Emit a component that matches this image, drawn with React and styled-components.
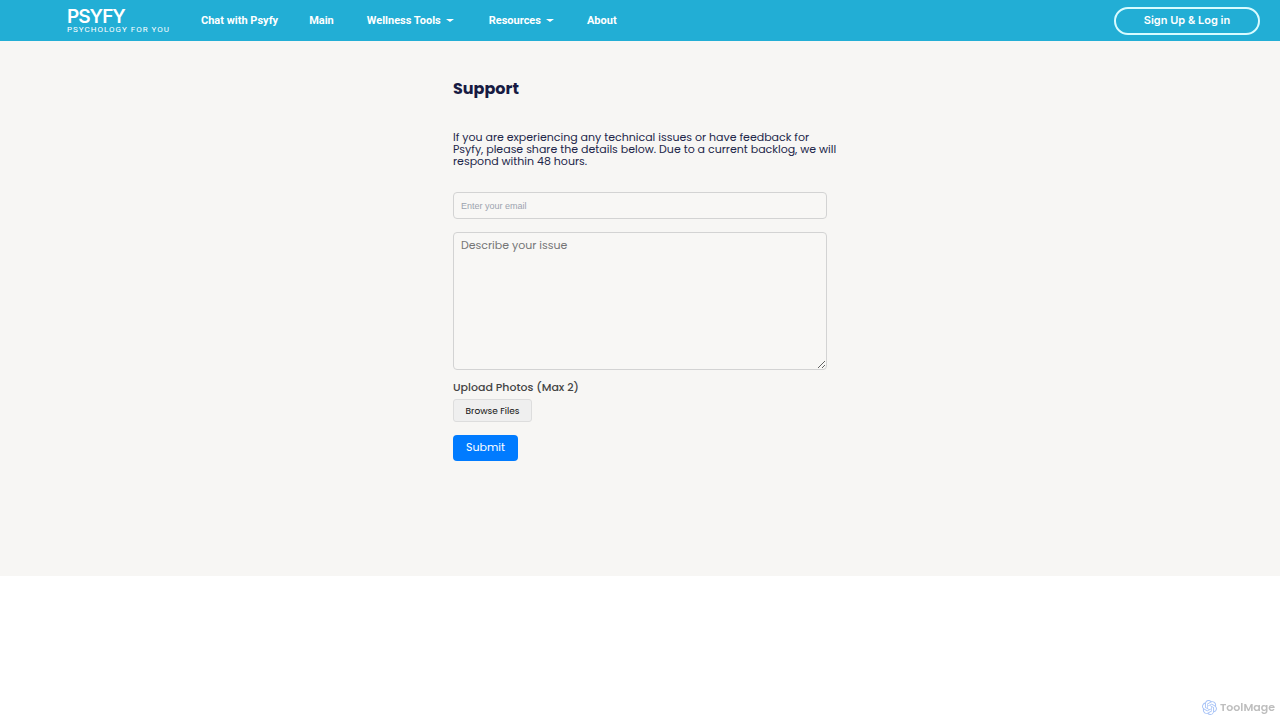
import React, { useRef, useState } from 'react'
import styled, { createGlobalStyle } from 'styled-components'
import { SiOpenai } from 'react-icons/si'

const GlobalStyle = createGlobalStyle`
    * {
        box-sizing: border-box;
    }

    body {
        margin: 0;
        background: #ffffff;
        font-family: Poppins, Inter, sans-serif;
    }
`

const Header = styled.header`
    display: flex;
    align-items: center;
    height: 41px;
    padding: 0 20px 0 67px;
    background-color: #22aed5;
    color: #ffffff;
`

const Logo = styled.a`
    display: flex;
    flex-direction: column;
    width: 104px;
    margin-right: 30px;
    color: #ffffff;
    font-family: Inter, sans-serif;
    text-decoration: none;
    white-space: nowrap;
`

const LogoName = styled.span`
    font-size: 19px;
    font-weight: 600;
    line-height: 18px;
    letter-spacing: -1px;
`

const LogoTagline = styled.span`
    font-family: Roboto, sans-serif;
    font-size: 8px;
    font-weight: 400;
    line-height: 8px;
    letter-spacing: 1px;
`

const Nav = styled.nav`
    display: flex;
    align-items: center;
    flex: 1;
    gap: 31px;
`

const NavLink = styled.a`
    color: #ffffff;
    font: 700 11px/16px Roboto, sans-serif;
    text-decoration: none;
    white-space: nowrap;
`

const NavDropdown = styled.button`
    display: flex;
    align-items: center;
    gap: 5px;
    padding: 0 2px;
    border: none;
    background: none;
    color: #ffffff;
    font: 700 11px/16px Roboto, sans-serif;
    white-space: nowrap;
    cursor: pointer;
`

const Caret = styled.span`
    border: 4px solid transparent;
    border-top: 3px solid #ffffff;
    border-bottom: none;
`

const LoginButton = styled.button`
    width: 146px;
    height: 28px;
    padding: 0 0 2px;
    border: 2px solid #d8fbff;
    border-radius: 14px;
    background: none;
    color: #ffffff;
    font: 600 11px/16px Inter, sans-serif;
    white-space: nowrap;
    cursor: pointer;
`

const Main = styled.main`
    padding: 36px 20px 115px;
    background-color: #f7f6f4;
`

const SupportForm = styled.form`
    display: flex;
    flex-direction: column;
    align-items: flex-start;
    max-width: 374px;
    margin: 0 auto;
`

const Title = styled.h1`
    margin: 0 0 30px;
    color: #171b43;
    font-size: 16px;
    font-weight: 700;
    line-height: 24px;
`

const Intro = styled.p`
    margin: 0 0 25px;
    color: #22264a;
    font-size: 11px;
    line-height: 12px;

    @media (min-width: 480px) {
        white-space: nowrap;
    }
`

const EmailInput = styled.input`
    width: 100%;
    height: 27px;
    margin-bottom: 13px;
    padding: 0 7px;
    border: 1px solid #d3d3d3;
    border-radius: 4px;
    background: #f8f7f5;
    font: 9px/12px 'Liberation Sans', sans-serif;

    &::placeholder {
        color: #9ca3af;
    }
`

const IssueInput = styled.textarea`
    width: 100%;
    height: 138px;
    margin-bottom: 9px;
    padding: 4px 7px;
    border: 1px solid #d3d3d3;
    border-radius: 4px;
    background: #f8f7f5;
    font: 11px/16px Poppins, Inter, sans-serif;
    resize: vertical;

    &::placeholder {
        color: #757575;
    }
`

const UploadLabel = styled.label`
    margin-bottom: 4px;
    color: #444444;
    font-size: 11px;
    font-weight: 500;
    line-height: 16px;
`

const BrowseButton = styled.button`
    width: 79px;
    height: 23px;
    margin-bottom: 13px;
    padding: 0;
    border: 1px solid #dddddd;
    border-radius: 3px;
    background-color: #efefef;
    color: #111111;
    font: 400 9px/14px Poppins, Inter, sans-serif;
    cursor: pointer;
`

const SubmitButton = styled.button`
    width: 65px;
    height: 26px;
    padding: 0 0 2px;
    border: none;
    border-radius: 4px;
    background-color: #007bff;
    color: #ffffff;
    font: 400 11px/16px Poppins, Inter, sans-serif;
    cursor: pointer;
`

const Watermark = styled.div`
    position: fixed;
    right: 5px;
    bottom: 5px;
    display: flex;
    align-items: center;
    gap: 3px;
    color: #bebebe;
    font-size: 11px;
    font-weight: 600;
    line-height: 16px;
`

const KnotIcon = styled(SiOpenai)`
    width: 15px;
    height: 15px;
    color: #a9c4f7;
`

const App = () => {
    const [email, setEmail] = useState('')
    const [issue, setIssue] = useState('')
    const fileInput = useRef(null)

    return (
        <>
            <GlobalStyle />
            <Header>
                <Logo href="#">
                    <LogoName>PSYFY</LogoName>
                    <LogoTagline>PSYCHOLOGY FOR YOU</LogoTagline>
                </Logo>
                <Nav>
                    <NavLink href="#chat">Chat with Psyfy</NavLink>
                    <NavLink href="#main">Main</NavLink>
                    <NavDropdown type="button">Wellness Tools <Caret /></NavDropdown>
                    <NavDropdown type="button">Resources <Caret /></NavDropdown>
                    <NavLink href="#about">About</NavLink>
                </Nav>
                <LoginButton type="button">Sign Up &amp; Log in</LoginButton>
            </Header>
            <Main>
                <SupportForm onSubmit={(e) => e.preventDefault()}>
                    <Title>Support</Title>
                    <Intro>
                        If you are experiencing any technical issues or have feedback for <br />
                        Psyfy, please share the details below. Due to a current backlog, we will <br />
                        respond within 48 hours.
                    </Intro>
                    <EmailInput
                        type="email"
                        aria-label="Enter your email"
                        placeholder="Enter your email"
                        value={email}
                        onChange={(e) => setEmail(e.target.value)}
                    />
                    <IssueInput
                        aria-label="Describe your issue"
                        placeholder="Describe your issue"
                        value={issue}
                        onChange={(e) => setIssue(e.target.value)}
                    />
                    <UploadLabel htmlFor="photos">Upload Photos (Max 2)</UploadLabel>
                    <input ref={fileInput} id="photos" type="file" accept="image/*" multiple hidden />
                    <BrowseButton type="button" onClick={() => fileInput.current.click()}>
                        Browse Files
                    </BrowseButton>
                    <SubmitButton type="submit">Submit</SubmitButton>
                </SupportForm>
            </Main>
            <Watermark>
                <KnotIcon />
                ToolMage
            </Watermark>
        </>
    )
}

export default App
